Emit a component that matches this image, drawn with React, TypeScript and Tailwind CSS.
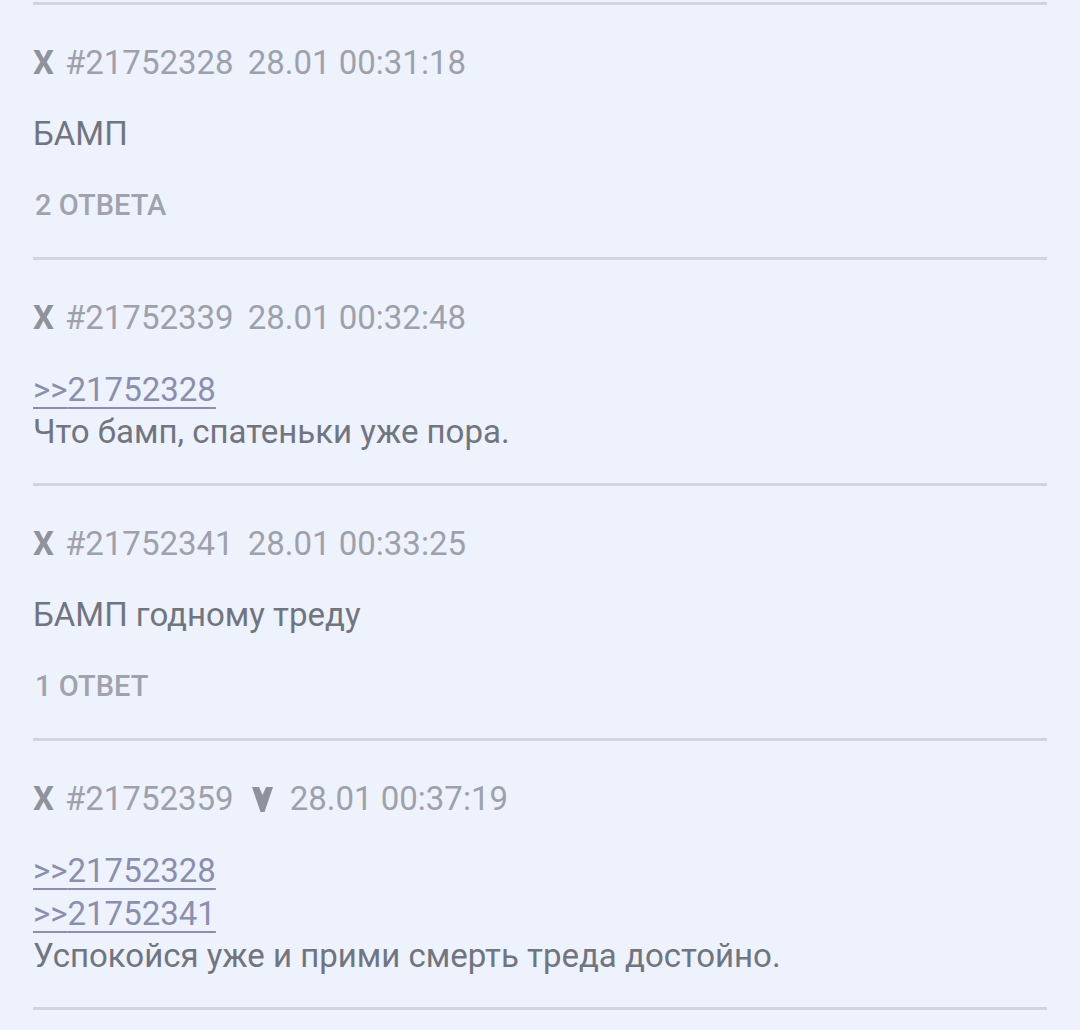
import type React from "react"

type Post = {
  id: string
  time: string
  mark?: boolean
  links?: string[]
  text: string
  replies?: string
}

const posts: Post[] = [
  { id: "21752328", time: "28.01 00:31:18", text: "БАМП", replies: "2 ответа" },
  { id: "21752339", time: "28.01 00:32:48", links: ["21752328"], text: "Что бамп, спатеньки уже пора." },
  { id: "21752341", time: "28.01 00:33:25", text: "БАМП годному треду", replies: "1 ответ" },
  {
    id: "21752359",
    time: "28.01 00:37:19",
    mark: true,
    links: ["21752328", "21752341"],
    text: "Успокойся уже и прими смерть треда достойно.",
  },
]

export default function App() {
  return (
    <div
      className="min-h-[1030px] bg-[#eef2fd] px-[33px] pt-[2px]"
      style={{ fontFamily: "Roboto, 'Noto Sans', sans-serif" } as React.CSSProperties}
    >
      <div className="border-t-[3px] border-[#cfd5e3]">
        {posts.map((p) => (
          <PostItem key={p.id} post={p} />
        ))}
      </div>
    </div>
  )
}

function PostItem({ post }: { post: Post }) {
  return (
    <div className="border-b-[3px] border-[#cfd5e3] pt-[40px] pb-[30px]">
      <div className="flex h-[36px] items-center text-[33px] text-[#9ea1ab]">
        <span className="font-bold text-[#8f929c]">X</span>
        <span className="ml-[11px]">#{post.id}</span>
        {post.mark && (
          <svg className="ml-[18px] h-[25px] w-[21px]" viewBox="0 0 21 25" fill="#8f929c">
            <polygon points="0,0 7,0 10.5,8 14,0 21,0 12.5,25 8.5,25" />
          </svg>
        )}
        <span className={post.mark ? "ml-[17px]" : "ml-[14px]"}>{post.time}</span>
      </div>
      <div className="mt-[32px] text-[33px] leading-[42px] text-[#71757f]">
        {post.links?.map((l) => (
          <div key={l} className="leading-[43px]">
            <span className="text-[#8b8fad] underline decoration-[2px] underline-offset-[6px]">&gt;&gt;{l}</span>
          </div>
        ))}
        <div>{post.text}</div>
      </div>
      {post.replies && (
        <div className="mt-[32px] mb-[4px] pl-[2px] text-[29px] font-medium leading-[36px] uppercase text-[#a0a3ad]">
          {post.replies}
        </div>
      )}
    </div>
  )
}
